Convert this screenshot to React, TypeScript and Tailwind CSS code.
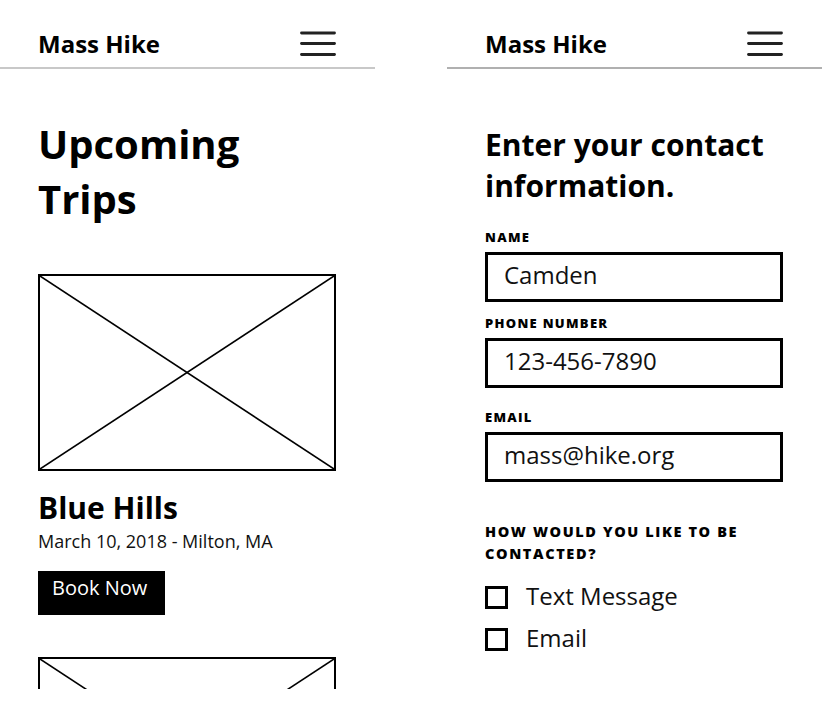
import React from "react";

const font = { fontFamily: '"Open Sans", "Noto Sans", sans-serif' };

function Menu() {
    return (
        <svg width="36" height="26" viewBox="0 0 36 26" className="shrink-0">
            <g stroke="#222" strokeWidth="2.8" strokeLinecap="round">
                <line x1="1.5" y1="2" x2="34.5" y2="2" />
                <line x1="1.5" y1="12.5" x2="34.5" y2="12.5" />
                <line x1="1.5" y1="23.5" x2="34.5" y2="23.5" />
            </g>
        </svg>
    );
}

function Header({ line }: { line: string }) {
    return (
        <header
            className={`flex h-[69px] items-center justify-between border-b-2 pl-[38px] pr-[39px] pt-[21px] ${line}`}
        >
            <span className="text-[24px] font-bold leading-[32px] text-black">Mass Hike</span>
            <Menu />
        </header>
    );
}

function Placeholder() {
    return (
        <div className="relative h-[197px] w-[298px] shrink-0 border-2 border-black">
            <svg
                className="absolute inset-0 h-full w-full"
                viewBox="0 0 100 100"
                preserveAspectRatio="none"
            >
                <line x1="0" y1="0" x2="100" y2="100" stroke="black" strokeWidth="1.6" vectorEffect="non-scaling-stroke" />
                <line x1="100" y1="0" x2="0" y2="100" stroke="black" strokeWidth="1.6" vectorEffect="non-scaling-stroke" />
            </svg>
        </div>
    );
}

function Field({ label, value, className }: { label: string; value: string; className?: string }) {
    return (
        <label className={`flex flex-col ${className ?? ""}`}>
            <span className="text-[13px] font-extrabold uppercase leading-[16px] tracking-[1.3px] text-black">
                {label}
            </span>
            <input
                readOnly
                value={value}
                className="mt-[7px] h-[50px] w-full border-[3px] border-black bg-white pb-[6px] pl-4 text-[24px] text-[#111] outline-none"
                style={font}
            />
        </label>
    );
}

function Check({ label }: { label: string }) {
    return (
        <label className="flex items-center gap-[18px]">
            <span className="mt-[3px] h-[23px] w-[23px] shrink-0 border-[3px] border-black" />
            <span className="text-[24px] leading-[32px] text-[#111]">{label}</span>
        </label>
    );
}

export default function App() {
    return (
        <div className="flex min-h-[711px] w-[822px] bg-white text-black" style={font}>
            {/* Trips screen */}
            <section className="h-[689px] w-[375px] shrink-0 overflow-hidden">
                <Header line="border-[#c8c8c8]" />
                <div className="px-[38px] pt-[47px]">
                    <h1 className="text-[40px] font-bold leading-[55px]">
                        Upcoming
                        <br />
                        Trips
                    </h1>
                    <div className="mt-[48px]">
                        <Placeholder />
                    </div>
                    <h2 className="mt-[19px] text-[30px] font-bold leading-[36px]">Blue Hills</h2>
                    <p className="mt-[3px] text-[18px] leading-[24px] text-[#111]">
                        March 10, 2018 - Milton, MA
                    </p>
                    <button className="mt-[18px] flex h-[44px] w-[127px] items-start bg-black pl-[14px] pt-[3px] text-[20px] leading-[28px] text-white">
                        Book Now
                    </button>
                    <div className="mt-[42px]">
                        <Placeholder />
                    </div>
                </div>
            </section>

            {/* Contact screen */}
            <section className="ml-[72px] w-[375px] shrink-0">
                <Header line="border-[#b0b0b0]" />
                <div className="pl-[38px] pr-[39px] pt-[55px]">
                    <h1 className="text-[30px] font-bold leading-[41px]">
                        Enter your contact information.
                    </h1>
                    <Field className="mt-[23px]" label="Name" value="Camden" />
                    <Field className="mt-[13px]" label="Phone Number" value="123-456-7890" />
                    <Field className="mt-[21px]" label="Email" value="mass@hike.org" />
                    <p className="mt-[39px] text-[14.5px] font-extrabold uppercase leading-[22px] tracking-[1.6px]">
                        How would you like to be
                        <br />
                        contacted?
                    </p>
                    <div className="mt-[15px] flex flex-col gap-[10px]">
                        <Check label="Text Message" />
                        <Check label="Email" />
                    </div>
                </div>
            </section>
        </div>
    );
}
